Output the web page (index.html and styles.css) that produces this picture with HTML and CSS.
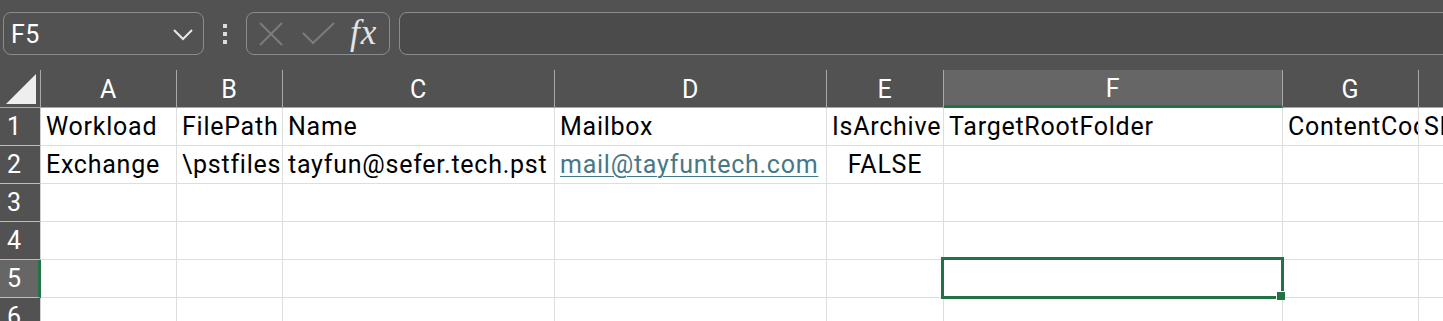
FILE: index.html
```html
<!DOCTYPE html>
<html>
<head>
<meta charset="utf-8">
<link rel="stylesheet" href="styles.css">
</head>
<body>
<div class="toolbar">
  <div class="namebox">
    <span class="ref">F5</span>
    <svg class="chev" width="20" height="12" viewBox="0 0 20 12"><path d="M1 1 L10 10 L19 1" fill="none" stroke="#e8e8e8" stroke-width="2"/></svg>
  </div>
  <div class="grip"><i></i><i></i><i></i></div>
  <div class="fxbox">
    <svg class="ico" width="24" height="24" viewBox="0 0 24 24"><path d="M1 1 L23 23 M23 1 L1 23" stroke="#7c7c7c" stroke-width="2" fill="none"/></svg>
    <svg class="ico check" width="33" height="23" viewBox="0 0 33 23"><path d="M1 11 L11 21 L32 1" stroke="#7c7c7c" stroke-width="2" fill="none"/></svg>
    <span class="fx">fx</span>
  </div>
  <div class="formula"></div>
</div>
<div class="sheet">
  <div class="corner"><svg width="31" height="30" viewBox="0 0 31 30"><path d="M30 0 L30 30 L0 30 Z" fill="#eeeeee"/></svg></div>
  <div class="ch">A</div>
  <div class="ch">B</div>
  <div class="ch">C</div>
  <div class="ch">D</div>
  <div class="ch">E</div>
  <div class="ch active">F</div>
  <div class="ch">G</div>
  <div class="ch">H</div>

  <div class="rh">1</div>
  <div class="c">Workload</div>
  <div class="c">FilePath</div>
  <div class="c">Name</div>
  <div class="c">Mailbox</div>
  <div class="c">IsArchive</div>
  <div class="c">TargetRootFolder</div>
  <div class="c clip">ContentCodePage</div>
  <div class="c">SPFileContainer</div>

  <div class="rh">2</div>
  <div class="c">Exchange</div>
  <div class="c">\pstfiles</div>
  <div class="c">tayfun@sefer.tech.pst</div>
  <div class="c"><span class="link">mail@tayfuntech.com</span></div>
  <div class="c center">FALSE</div>
  <div class="c"></div>
  <div class="c"></div>
  <div class="c"></div>

  <div class="rh">3</div>
  <div class="c"></div><div class="c"></div><div class="c"></div><div class="c"></div><div class="c"></div><div class="c"></div><div class="c"></div><div class="c"></div>

  <div class="rh">4</div>
  <div class="c"></div><div class="c"></div><div class="c"></div><div class="c"></div><div class="c"></div><div class="c"></div><div class="c"></div><div class="c"></div>

  <div class="rh active">5</div>
  <div class="c"></div><div class="c"></div><div class="c"></div><div class="c"></div><div class="c"></div>
  <div class="c sel"><div class="selbox"></div><div class="handle"></div></div>
  <div class="c"></div><div class="c"></div>

  <div class="rh">6</div>
  <div class="c"></div><div class="c"></div><div class="c"></div><div class="c"></div><div class="c"></div><div class="c"></div><div class="c"></div><div class="c"></div>
</div>
</body>
</html>
```

FILE: styles.css
```css
html, body {
  margin: 0;
  padding: 0;
  background: #525252;
  overflow: hidden;
  height: 321px;
  width: 1443px;
}
body {
  font-family: "Roboto", "Liberation Sans", sans-serif;
}
.toolbar {
  height: 70px;
  box-sizing: border-box;
  padding: 12px 0 0 3px;
  display: flex;
  align-items: flex-start;
}
.namebox {
  width: 201px;
  height: 43px;
  box-sizing: border-box;
  border: 1px solid #8c8c8c;
  border-radius: 8px;
  display: flex;
  align-items: center;
  justify-content: space-between;
  padding: 0 10px 0 7px;
  color: #ffffff;
  font-size: 25px;
  letter-spacing: 0.5px;
}
.namebox .ref { line-height: 1; padding-top: 2px; }
.chev { margin-top: 2px; }
.grip {
  width: 4px;
  margin: 12px 0 0 19px;
  display: flex;
  flex-direction: column;
  gap: 4px;
}
.grip i {
  display: block;
  width: 4px;
  height: 4px;
  background: #dcdcdc;
}
.fxbox {
  width: 144px;
  height: 43px;
  box-sizing: border-box;
  margin-left: 19px;
  border: 1px solid #8c8c8c;
  border-radius: 8px;
  display: flex;
  align-items: center;
  padding-left: 12px;
}
.ico { display: block; }
.check { margin-left: 19px; margin-top: -1px; }
.fx {
  margin-left: 15px;
  font-family: "Liberation Serif", "DejaVu Serif", serif;
  font-style: italic;
  font-size: 35px;
  color: #e4e4e4;
  line-height: 1;
  margin-top: -2px;
  letter-spacing: 1px;
}
.formula {
  flex: 1;
  height: 43px;
  box-sizing: border-box;
  margin-left: 9px;
  margin-right: -12px;
  border: 1px solid #8c8c8c;
  border-radius: 8px;
  background: #4b4b4b;
}
.sheet {
  display: grid;
  grid-template-columns: 41px 136px 106px 272px 272px 117px 339px 136px 136px;
  grid-auto-rows: 38px;
  font-size: 25px;
  letter-spacing: 0.75px;
}
.corner {
  border-right: 1px solid #a8a8a8;
  border-bottom: 1px solid #a8a8a8;
  background: #525252;
  display: flex;
  align-items: flex-start;
  padding: 4px 0 0 6px;
  box-sizing: border-box;
}
.corner svg { display: block; }
.ch {
  background: #525252;
  color: #ffffff;
  border-right: 1px solid #a8a8a8;
  border-bottom: 1px solid #a8a8a8;
  text-align: center;
  line-height: 40px;
  box-sizing: border-box;
  overflow: hidden;
}
.ch.active {
  background: #666666;
  border-bottom: 3px solid #217346;
  line-height: 38px;
}
.rh {
  background: #525252;
  color: #ffffff;
  border-right: 1px solid #d0d0d0;
  border-bottom: 1px solid #bdbdbd;
  padding-left: 7px;
  line-height: 38px;
  box-sizing: border-box;
}
.rh.active {
  background: #666666;
  border-right: 3px solid #217346;
}
.c {
  background: #ffffff;
  color: #000000;
  border-right: 1px solid #dedede;
  border-bottom: 1px solid #dedede;
  box-sizing: border-box;
  padding-left: 5px;
  line-height: 38px;
  white-space: nowrap;
  overflow: visible;
  position: relative;
}
.c.clip { overflow: hidden; }
.c.center { text-align: center; padding-left: 0; }
.link {
  color: #467886;
  text-decoration: underline;
  text-decoration-thickness: 1px;
  text-underline-offset: 3px;
}
.sel { z-index: 2; }
.selbox {
  position: absolute;
  top: -3px;
  left: -3px;
  right: -2px;
  bottom: -2px;
  border: 3px solid #217346;
}
.handle {
  position: absolute;
  right: -3px;
  bottom: -3px;
  width: 8px;
  height: 8px;
  background: #217346;
  box-shadow: -1px -1px 0 #ffffff;
}
```
